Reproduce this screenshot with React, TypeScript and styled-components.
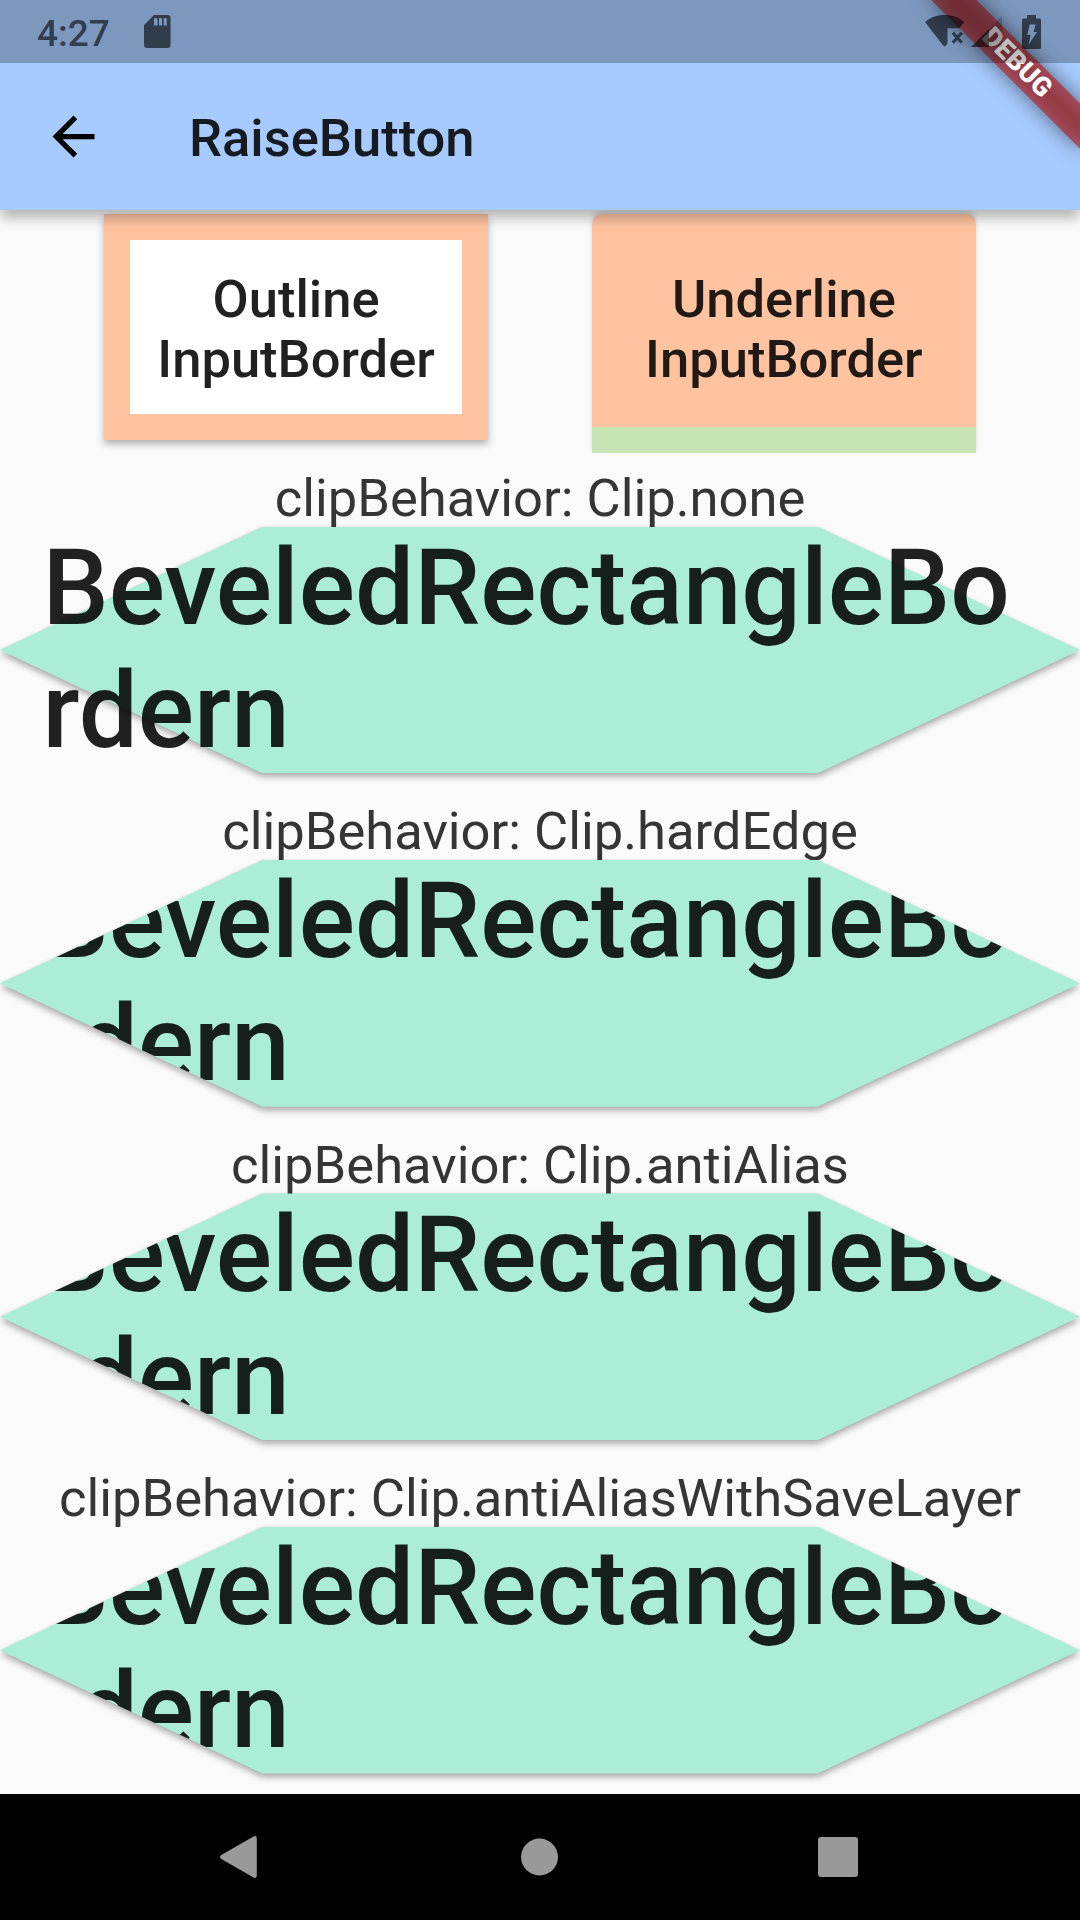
import React from "react";
import styled, { createGlobalStyle, css } from "styled-components";

const GlobalStyle = createGlobalStyle`
  *, *::before, *::after { box-sizing: border-box; }
  html, body { margin: 0; padding: 0; }
  body {
    background: #fafafa;
    font-family: Roboto, "Noto Sans", sans-serif;
    color: rgba(0, 0, 0, 0.87);
  }
`;

const Screen = styled.div`
  position: relative;
  display: flex;
  flex-direction: column;
  width: 1080px;
  height: 1920px;
  overflow: hidden;
  background: #fafafa;
`;

const Header = styled.header`
  position: relative;
  z-index: 1;
  flex: none;
  background: #a7cbff;
  box-shadow: 0 9px 12px -1px rgba(0, 0, 0, 0.28);
`;

const StatusBar = styled.div`
  position: relative;
  z-index: 3;
  display: flex;
  align-items: center;
  justify-content: space-between;
  height: 63px;
  padding: 0 39px 0 37px;
  background: rgba(0, 0, 0, 0.25);
  color: rgba(0, 0, 0, 0.6);
`;

const StatusGroup = styled.div<{ $gap: number }>`
  display: flex;
  align-items: center;
  gap: ${(p) => p.$gap}px;
`;

const Clock = styled.span`
  font-size: 37px;
  font-weight: 500;
  line-height: 44px;
  padding-top: 4px;
`;

const Toolbar = styled.div`
  display: flex;
  align-items: center;
  height: 147px;
  padding-left: 42px;
  gap: 84px;
`;

const BackButton = styled.button`
  display: flex;
  padding: 0;
  border: 0;
  background: none;
  color: #000;
`;

const Title = styled.h1`
  margin: 0;
  padding-top: 2px;
  font-size: 52.5px;
  font-weight: 500;
  line-height: 62px;
`;

const BannerArea = styled.div`
  position: absolute;
  z-index: 2;
  top: 0;
  right: 0;
  width: 240px;
  height: 210px;
  overflow: hidden;
  pointer-events: none;
`;

const band = css`
  position: absolute;
  top: 47.4px;
  right: -41.9px;
  width: 210px;
  height: 31.5px;
`;

const BannerShadow = styled.div`
  ${band}
  background: rgba(0, 0, 0, 0.5);
  transform: rotate(45deg);
  filter: blur(10.4px);
`;

const BannerBand = styled.div`
  ${band}
  display: flex;
  align-items: center;
  justify-content: center;
  background: rgba(183, 28, 28, 0.627);
  transform: rotate(45deg);
  color: #fff;
  font-size: 26.8px;
  font-weight: 900;
  line-height: 31.5px;
`;

const Body = styled.main`
  flex: 1;
  min-height: 0;
  padding-top: 4px;
`;

const ButtonRow = styled.div`
  display: flex;
  justify-content: space-evenly;
  align-items: flex-start;
  height: 253px;
`;

const InputButton = styled.button<{ $kind: "outline" | "underline" }>`
  display: flex;
  align-items: center;
  justify-content: center;
  width: 383.4px;
  margin: 0;
  font-family: inherit;
  font-size: 52.5px;
  font-weight: 500;
  line-height: 60px;
  text-align: center;
  white-space: pre-line;
  color: rgba(0, 0, 0, 0.87);
  ${(p) =>
    p.$kind === "outline"
      ? css`
          height: 226px;
          padding: 4px 0 0;
          border: 26.25px solid #ffc3a0;
          background: #fff;
          box-shadow: 0 4px 7px rgba(0, 0, 0, 0.3);
        `
      : css`
          height: 239px;
          padding: 17px 0 0;
          border: 0 solid #c7e5b4;
          border-bottom-width: 26px;
          border-radius: 10.5px 10.5px 0 0;
          background: #ffc3a0;
          box-shadow: 0 -4px 4px rgba(0, 0, 0, 0.13);
        `}
`;

const Caption = styled.div`
  height: 59.7px;
  padding-top: 1px;
  font-size: 52.5px;
  line-height: 61.4px;
  text-align: center;
  white-space: nowrap;
  color: #353535;
`;

const Demo = styled.section`
  height: 333.4px;
`;

const bevel = "polygon(0 50%, 262.5px 0, calc(100% - 262.5px) 0, 100% 50%, calc(100% - 262.5px) 100%, 262.5px 100%)";

const BevelButton = styled.button`
  display: grid;
  width: 100%;
  height: 246.7px;
  padding: 0;
  border: 0;
  background: none;
  font-family: inherit;
  text-align: left;
`;

const BevelShadow = styled.span`
  grid-area: 1 / 1;
  display: grid;
  filter: drop-shadow(0 4.5px 3px rgba(0, 0, 0, 0.28)) drop-shadow(0 0 1px rgba(0, 0, 0, 0.1));
`;

const BevelShape = styled.span`
  background: #abedd7;
  clip-path: ${bevel};
`;

const BevelLabel = styled.span<{ $clipped: boolean }>`
  grid-area: 1 / 1;
  position: relative;
  padding: 0.4px 42.5px 0;
  font-size: 105px;
  font-weight: 500;
  line-height: 123px;
  white-space: pre;
  color: rgba(0, 0, 0, 0.87);
  clip-path: ${(p) => (p.$clipped ? bevel : "none")};
`;

const NavBar = styled.nav`
  display: flex;
  flex: none;
  align-items: center;
  justify-content: space-between;
  height: 126px;
  padding: 0 222px 0 220px;
  background: #000;
  color: #999;
`;

const demos = [
  { name: "none", clipped: false },
  { name: "hardEdge", clipped: true },
  { name: "antiAlias", clipped: true },
  { name: "antiAliasWithSaveLayer", clipped: true },
];

const SdCardIcon = () => (
  <svg width="27" height="33" viewBox="0 0 27 33" fill="currentColor">
    <path
      fillRule="evenodd"
      d="M10 0h14Q26.500 0 26.500 3V30Q26.500 33 23.500 33H3Q0 33 0 30V10zM10 3.300v7.200h3.500V3.300zM15 3.300v7.200h3V3.300zM19.700 3.300v7.200h3V3.300z"
    />
  </svg>
);

const WifiOffIcon = () => (
  <svg width="40" height="33" viewBox="0 0 40 33" fill="currentColor">
    <path d="M0 7C5 2.500 12 0 19.700 0s14.500 2.500 19.600 7L34.300 13.300H22.500V28.500L20.800 30.700q-1.200 1.200-2.400 0z" />
    <path d="M27.800 17.800l9 10M36.800 17.800l-9 10" fill="none" stroke="currentColor" strokeWidth="3.200" />
  </svg>
);

const SignalIcon = () => (
  <svg width="32" height="32" viewBox="0 0 32 32" fill="currentColor">
    <path d="M31 0v31H18V13z" opacity=".3" />
    <path d="M18 13v18H0z" />
  </svg>
);

const BatteryIcon = () => (
  <svg width="19" height="34" viewBox="0 0 19 34" fill="currentColor">
    <path
      fillRule="evenodd"
      d="M5 0h9v3.500h3.500Q19 3.500 19 5v27.500q0 1.500-1.500 1.500h-16Q0 34 0 32.500V5q0-1.500 1.500-1.500H5zM7.700 9.500L5.300 20H8.500L6.500 30L15 17H11.500L13.700 9.500z"
    />
  </svg>
);

const BackIcon = () => (
  <svg width="63" height="63" viewBox="0 0 24 24" fill="currentColor">
    <path d="M20 11H7.830l5.590-5.590L12 4l-8 8 8 8 1.410-1.410L7.830 13H20v-2z" />
  </svg>
);

export default function App() {
  return (
    <Screen>
      <GlobalStyle />
      <Header>
        <StatusBar>
          <StatusGroup $gap={34}>
            <Clock>4:27</Clock>
            <SdCardIcon />
          </StatusGroup>
          <StatusGroup $gap={19}>
            <StatusGroup $gap={6}>
              <WifiOffIcon />
              <SignalIcon />
            </StatusGroup>
            <BatteryIcon />
          </StatusGroup>
        </StatusBar>
        <Toolbar>
          <BackButton aria-label="Back">
            <BackIcon />
          </BackButton>
          <Title>RaiseButton</Title>
        </Toolbar>
        <BannerArea>
          <BannerShadow />
          <BannerBand>DEBUG</BannerBand>
        </BannerArea>
      </Header>
      <Body>
        <ButtonRow>
          <InputButton $kind="outline">{"Outline\nInputBorder"}</InputButton>
          <InputButton $kind="underline">{"Underline\nInputBorder"}</InputButton>
        </ButtonRow>
        {demos.map((d) => (
          <Demo key={d.name}>
            <Caption>clipBehavior: Clip.{d.name}</Caption>
            <BevelButton>
              <BevelShadow>
                <BevelShape />
              </BevelShadow>
              <BevelLabel $clipped={d.clipped}>{"BeveledRectangleBo\nrdern"}</BevelLabel>
            </BevelButton>
          </Demo>
        ))}
      </Body>
      <NavBar>
        <svg width="41" height="42" viewBox="0 0 41 42" fill="currentColor">
          <path d="M33.500.600Q36.800-1 36.800 2.500v37q0 3.500-3.300 1.900L1.300 23q-2.600-2 0-4z" />
        </svg>
        <svg width="38" height="38" viewBox="0 0 38 38" fill="currentColor">
          <circle cx="18.500" cy="19" r="18.500" />
        </svg>
        <svg width="40" height="40" viewBox="0 0 40 40" fill="currentColor">
          <rect width="40" height="40" rx="3" />
        </svg>
      </NavBar>
    </Screen>
  );
}
